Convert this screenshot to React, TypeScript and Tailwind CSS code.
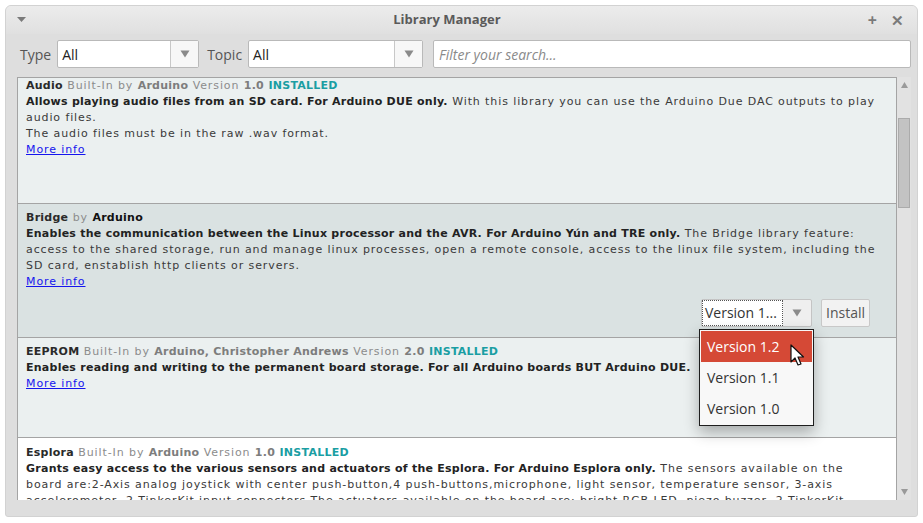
import React from 'react';

const ui = { fontFamily: '"Open Sans", "Noto Sans", sans-serif' };
const list = { fontFamily: '"DejaVu Sans", Verdana, sans-serif' };

const Arrow = ({ className = '' }: { className?: string }) => (
  <svg width="10" height="8" viewBox="0 0 10 8" className={className}>
    <path d="M0.5 0.5 L9.5 0.5 L5 7.5 Z" fill="#8a8a8a" />
  </svg>
);

const Combo = ({ value, width }: { value: string; width: string }) => (
  <div className={`flex h-[28px] ${width} rounded-[2px] border border-[#b9b9b9] bg-white`}>
    <div className="flex-1 flex items-center pl-[4px] text-[14px] text-[#222]">{value}</div>
    <div className="w-[28px] flex items-center justify-center border-l border-[#c8c8c8] bg-[#f7f7f7]">
      <Arrow />
    </div>
  </div>
);

const B = ({ children, className = 'text-[#222]' }: { children: React.ReactNode; className?: string }) => (
  <span className={`font-bold tracking-[0.25px] ${className}`}>{children}</span>
);
const Meta = ({ children }: { children: React.ReactNode }) => (
  <span className="text-[#8c8c8c]">{children}</span>
);
const MetaB = ({ children }: { children: React.ReactNode }) => <B className="text-[#7d7d7d]">{children}</B>;
const Installed = () => <B className="text-[#1a9ea3]">INSTALLED</B>;
const MoreInfo = () => <div className="text-[#1515ee] underline">More info</div>;
const Line = ({ children }: { children: React.ReactNode }) => (
  <div className="whitespace-nowrap">{children}</div>
);

const Cursor = () => (
  <svg width="16" height="24" viewBox="0 0 16 24" className="absolute left-[89px] top-[13px]">
    <path
      d="M1 1 L1 18 L5 14 L8 21 L11 20 L8 13 L13.5 13 Z"
      fill="#fff"
      stroke="#111"
      strokeWidth="1.2"
      strokeLinejoin="round"
    />
  </svg>
);

export default function App() {
  return (
    <div className="w-[923px] h-[523px] bg-white px-[5px] pt-[5px] pb-[6px]" style={ui}>
      <div className="h-full flex flex-col rounded-t-[6px] rounded-b-[3px] border border-[#d2d2d2] bg-[#dedede] overflow-hidden">
        {/* Title bar */}
        <div className="h-[28px] flex items-center px-[11px] bg-gradient-to-b from-[#ececec] to-[#e0e0e0] shrink-0">
          <svg width="9" height="6" viewBox="0 0 9 6">
            <path d="M0 0 L9 0 L4.5 5 Z" fill="#7a7a7a" />
          </svg>
          <div className="flex-1 text-center text-[13px] font-bold text-[#5a5a5a]">Library Manager</div>
          <span className="text-[16px] font-bold text-[#7a7a7a] leading-none mr-[14px]">+</span>
          <span className="text-[15px] font-bold text-[#7a7a7a] leading-none mr-[2px]">✕</span>
        </div>

        {/* Filters */}
        <div className="flex items-center gap-[6px] pl-[14px] pr-[6px] pt-[6px] pb-[9px] shrink-0">
          <span className="text-[14px] text-[#555]">Type</span>
          <Combo value="All" width="w-[142px]" />
          <span className="ml-[2px] text-[14px] text-[#555]">Topic</span>
          <Combo value="All" width="w-[175px]" />
          <div className="ml-[4px] flex-1 h-[28px] rounded-[2px] border border-[#b9b9b9] bg-white flex items-center pl-[5px] text-[14px] italic text-[#8a8a8a]">
            Filter your search...
          </div>
        </div>

        {/* List */}
        <div className="flex-1 flex ml-[11px] mr-[6px] mb-[16px] min-h-0">
          <div
            className="relative flex-1 border border-[#a4a4a4] border-r-0 border-b-0 overflow-hidden text-[11px] leading-[16px] tracking-[0.9px] text-[#3a3a3a]"
            style={list}
          >
            {/* Audio */}
            <div className="h-[126px] bg-[#ebf0f0] border-b border-[#a4a4a4] pl-[8px] pt-0">
              <Line>
                <B className="text-[#2a2a2a]">Audio</B> <Meta>Built-In</Meta> <Meta>by</Meta>{' '}
                <MetaB>Arduino</MetaB> <Meta>Version</Meta> <MetaB>1.0</MetaB> <Installed />
              </Line>
              <Line>
                <B>Allows playing audio files from an SD card. For Arduino DUE only.</B> With this library you can use
                the Arduino Due DAC outputs to play
              </Line>
              <Line>audio files.</Line>
              <Line>The audio files must be in the raw .wav format.</Line>
              <MoreInfo />
            </div>

            {/* Bridge */}
            <div className="h-[134px] bg-[#dae2e2] border-b border-[#a4a4a4] pl-[8px] pr-[26px] pt-[6px] flex flex-col">
              <Line>
                <B className="text-[#2a2a2a]">Bridge</B> <Meta>by</Meta> <B className="text-[#111]">Arduino</B>
              </Line>
              <Line>
                <B>Enables the communication between the Linux processor and the AVR. For Arduino Yún and TRE only.</B>{' '}
                The Bridge library feature:
              </Line>
              <Line>
                access to the shared storage, run and manage linux processes, open a remote console, access to the linux
                file system, including the
              </Line>
              <Line>SD card, enstablish http clients or servers.</Line>
              <MoreInfo />
              <div className="flex justify-end items-center gap-[9px] mt-[9px] tracking-normal" style={ui}>
                <div className="relative flex h-[28px] w-[111px] rounded-[2px] border border-[#c4c4c4] bg-[#efefef]">
                  <div className="flex-1 flex items-center pl-[3px] bg-white outline-1 outline-dotted outline-[#555] -outline-offset-1 text-[14px] text-[#333]">
                    Version 1...
                  </div>
                  <div className="w-[28px] flex items-center justify-center">
                    <Arrow />
                  </div>
                  {/* Popup */}
                  <div className="absolute left-[-3px] top-[29px] w-[115px] border border-[#1e1e1e] bg-[#f8f8f8] p-[1px] shadow-[0_6px_14px_rgba(0,0,0,0.3)] text-[14px] z-10">
                    <div className="relative h-[31px] flex items-center pl-[6px] bg-[#d54936] text-white">
                      Version 1.2
                      <Cursor />
                    </div>
                    <div className="h-[31px] flex items-center pl-[6px] text-[#333]">Version 1.1</div>
                    <div className="h-[31px] flex items-center pl-[6px] text-[#333]">Version 1.0</div>
                  </div>
                </div>
                <div className="h-[28px] px-[4px] flex items-center rounded-[2px] border border-[#c8c8c8] bg-[#f2f2f2] text-[14px] text-[#555]">
                  Install
                </div>
              </div>
            </div>

            {/* EEPROM */}
            <div className="h-[100px] bg-[#ebf0f0] border-b border-[#a4a4a4] pl-[8px] pt-[6px]">
              <Line>
                <B className="text-[#2a2a2a]">EEPROM</B> <Meta>Built-In</Meta> <Meta>by</Meta>{' '}
                <MetaB>Arduino, Christopher Andrews</MetaB> <Meta>Version</Meta> <MetaB>2.0</MetaB> <Installed />
              </Line>
              <Line>
                <B>Enables reading and writing to the permanent board storage. For all Arduino boards BUT Arduino DUE.</B>
              </Line>
              <MoreInfo />
            </div>

            {/* Esplora */}
            <div className="bg-white pl-[8px] pt-[7px] pb-[10px]">
              <Line>
                <B className="text-[#2a2a2a]">Esplora</B> <Meta>Built-In</Meta> <Meta>by</Meta>{' '}
                <MetaB>Arduino</MetaB> <Meta>Version</Meta> <MetaB>1.0</MetaB> <Installed />
              </Line>
              <Line>
                <B>Grants easy access to the various sensors and actuators of the Esplora. For Arduino Esplora only.</B>{' '}
                The sensors available on the
              </Line>
              <Line>
                board are:2-Axis analog joystick with center push-button,4 push-buttons,microphone, light sensor,
                temperature sensor, 3-axis
              </Line>
              <Line>
                accelerometer, 2 TinkerKit input connectors.The actuators available on the board are: bright RGB LED,
                piezo buzzer, 2 TinkerKit
              </Line>
            </div>
          </div>

          {/* Scrollbar */}
          <div className="w-[15px] flex flex-col bg-[#e2e2e2] border-l border-[#a4a4a4]">
            <div className="h-[16px] flex items-center justify-center">
              <svg width="7" height="6" viewBox="0 0 7 6">
                <path d="M3.5 0 L7 6 L0 6 Z" fill="#9a9a9a" />
              </svg>
            </div>
            <div className="mt-[25px] mx-[1px] h-[90px] bg-[#c3c3c3] border border-[#ababab]" />
            <div className="flex-1" />
            <div className="h-[16px] flex items-center justify-center">
              <svg width="7" height="6" viewBox="0 0 7 6">
                <path d="M0 0 L7 0 L3.5 6 Z" fill="#9a9a9a" />
              </svg>
            </div>
          </div>
        </div>
      </div>
    </div>
  );
}
